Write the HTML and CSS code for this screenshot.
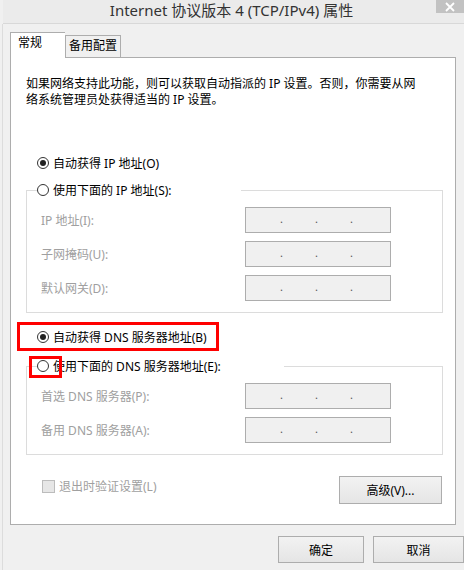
FILE: index.html
```html
<!DOCTYPE html>
<html lang="zh-CN">
<head>
  <meta charset="UTF-8">
  <title>Internet 协议版本 4 (TCP/IPv4) 属性</title>
  <link rel="stylesheet" href="styles.css">
</head>
<body>
  <div class="titlebar">
    <span class="title">Internet 协议版本 4 (TCP/IPv4) 属性</span>
    <span class="close">
      <svg width="12" height="10" viewBox="0 0 12 10"><path d="M2 1 L10 9 M10 1 L2 9" stroke="#fff" stroke-width="1.8"/></svg>
    </span>
  </div>

  <div class="client">
    <div class="tabs">
      <div class="tab active">常规</div>
      <div class="tab">备用配置</div>
    </div>

    <div class="panel">
      <p class="desc">如果网络支持此功能，则可以获取自动指派的 IP 设置。否则，你需要从网络系统管理员处获得适当的 IP 设置。</p>

      <div class="radio-row first">
        <span class="radio checked"></span>自动获得 IP 地址(O)
      </div>

      <div class="group">
        <div class="legend legend-ip"><span class="radio"></span>使用下面的 IP 地址(S):</div>
        <div class="field"><span class="label">IP 地址(I):</span><span class="ipbox"><i>.</i><i>.</i><i>.</i></span></div>
        <div class="field"><span class="label">子网掩码(U):</span><span class="ipbox"><i>.</i><i>.</i><i>.</i></span></div>
        <div class="field"><span class="label">默认网关(D):</span><span class="ipbox"><i>.</i><i>.</i><i>.</i></span></div>
      </div>

      <div class="radio-row dns-auto">
        <span class="radio checked"></span>自动获得 DNS 服务器地址(B)
        <span class="mark mark-big"></span>
      </div>

      <div class="group group-dns">
        <div class="legend legend-dns"><span class="radio"></span>使用下面的 DNS 服务器地址(E):<span class="mark mark-small"></span></div>
        <div class="field"><span class="label">首选 DNS 服务器(P):</span><span class="ipbox"><i>.</i><i>.</i><i>.</i></span></div>
        <div class="field"><span class="label">备用 DNS 服务器(A):</span><span class="ipbox"><i>.</i><i>.</i><i>.</i></span></div>
      </div>

      <div class="bottom-row">
        <label class="check"><span class="checkbox"></span>退出时验证设置(L)</label>
        <button class="btn btn-adv">高级(V)...</button>
      </div>
    </div>

    <div class="actions">
      <button class="btn btn-ok">确定</button>
      <button class="btn btn-cancel">取消</button>
    </div>
  </div>
</body>
</html>
```

FILE: styles.css
```css
body {
  margin: 0;
  width: 464px;
  height: 570px;
  overflow: hidden;
  background: #f0f0f0;
  font-family: "Noto Sans", "Noto Sans CJK SC", sans-serif;
  font-size: 12px;
  color: #000;
}
.titlebar {
  position: relative;
  height: 23px;
  background: #ebebeb;
  text-align: center;
  border-bottom: 1px solid #d8d8d8;
  margin-left: 3px;
}
.title {
  display: block;
  font-size: 15px;
  line-height: 20px;
  color: #333;
  padding-right: 4px;
}
.close {
  position: absolute;
  top: 0;
  right: 0;
  width: 28px;
  height: 13px;
  background: #c2c2c2;
  display: flex;
  align-items: center;
  justify-content: center;
}
.client {
  margin-left: 2px;
  border-left: 1px solid #dcdcdc;
  padding: 9px 0 0 7px;
  height: 540px;
}
.tabs {
  display: flex;
  align-items: flex-end;
  height: 24px;
  position: relative;
  z-index: 1;
}
.tab {
  border: 1px solid #adadad;
  border-bottom: none;
  background: #f0f0f0;
  height: 21px;
  line-height: 20px;
  padding: 0 3px;
}
.tab.active {
  background: #fff;
  height: 25px;
  width: 44px;
  padding-left: 7px;
  margin-bottom: -1px;
  border-right: none;
}
.tab:not(.active) {
  width: 48px;
}
.panel {
  position: relative;
  width: 444px;
  height: 466px;
  background: #fff;
  border: 1px solid #adadad;
}
.desc {
  margin: 18px 0 0 15px;
  width: 394px;
  line-height: 16px;
}
.radio-row {
  display: flex;
  align-items: center;
  height: 16px;
  padding-left: 26px;
  position: relative;
}
.radio-row.first {
  margin-top: 47px;
}
.radio {
  display: inline-block;
  width: 10px;
  height: 10px;
  border: 1px solid #333;
  border-radius: 50%;
  background: #fff;
  margin-right: 4px;
  position: relative;
  flex: none;
}
.radio.checked::after {
  content: "";
  position: absolute;
  left: 2px;
  top: 2px;
  width: 6px;
  height: 6px;
  border-radius: 50%;
  background: #222;
}
.group {
  margin: 19px 12px 0 15px;
  border: 1px solid #dcdcdc;
  padding: 0 0 11px 14px;
}
.legend {
  display: flex;
  align-items: center;
  height: 16px;
  margin: -9px 0 9px -4px;
  background: #fff;
  position: relative;
}
.legend-ip {
  width: 204px;
}
.legend-dns {
  width: 247px;
}
.field {
  display: flex;
  align-items: center;
  height: 26px;
  margin-bottom: 8px;
}
.field:last-child {
  margin-bottom: 0;
}
.label {
  width: 204px;
  color: #a0a0a0;
}
.ipbox {
  display: flex;
  width: 146px;
  height: 26px;
  box-sizing: border-box;
  padding-left: 34px;
  border: 1px solid #adadad;
  background: #f0f0f0;
}
.ipbox i {
  font-style: normal;
  width: 35px;
  line-height: 22px;
  color: #555;
  font-size: 11px;
}
.dns-auto {
  margin-top: 16px;
}
.group-dns {
  margin-top: 21px;
}
.mark {
  position: absolute;
  border: 3px solid #f00;
  pointer-events: none;
}
.mark-big {
  left: 6px;
  top: -7px;
  width: 196px;
  height: 23px;
}
.mark-small {
  left: -8px;
  top: -2px;
  width: 27px;
  height: 16px;
}
.bottom-row {
  display: flex;
  align-items: flex-start;
  justify-content: space-between;
  margin: 21px 13px 0 31px;
  height: 28px;
}
.check {
  display: flex;
  align-items: center;
  margin-top: 1px;
  color: #a0a0a0;
}
.checkbox {
  width: 11px;
  height: 11px;
  border: 1px solid #bcbcbc;
  background: #e6e6e6;
  margin-right: 4px;
}
.btn {
  font-family: inherit;
  font-size: 12px;
  color: #000;
  border: 1px solid #adadad;
  background: linear-gradient(#f2f2f2, #e5e5e5);
  padding: 0;
  cursor: pointer;
}
.btn-adv {
  width: 103px;
  height: 28px;
}
.actions {
  display: flex;
  justify-content: flex-end;
  gap: 9px;
  margin-top: 11px;
}
.btn-ok,
.btn-cancel {
  height: 27px;
}
.btn-ok {
  width: 86px;
}
.btn-cancel {
  width: 91px;
}
```
